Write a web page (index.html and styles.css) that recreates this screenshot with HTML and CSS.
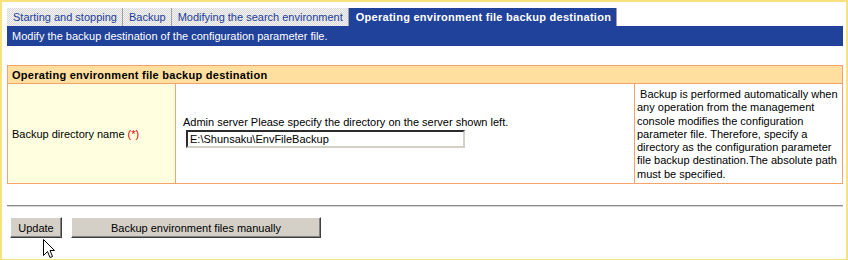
FILE: index.html
```html
<!DOCTYPE html>
<html lang="en">
  <head>
    <meta charset="UTF-8" />
    <title>Operating environment file backup destination</title>
    <link rel="stylesheet" href="styles.css">
  </head>
  <body>
    <div class="frame">
      <ul class="tabs">
        <li><a href="#">Starting and stopping</a></li>
        <li><a href="#">Backup</a></li>
        <li><a href="#">Modifying the search environment</a></li>
        <li class="active"><a href="#">Operating environment file backup destination</a></li>
      </ul>
      <div class="tab-desc">Modify the backup destination of the configuration parameter file.</div>

      <table class="section">
        <tr>
          <th colspan="3">Operating environment file backup destination</th>
        </tr>
        <tr>
          <td class="label">Backup directory name <span class="req">(*)</span></td>
          <td class="field">
            <div class="hint">Admin server Please specify the directory on the server shown left.</div>
            <input type="text" class="text-input" value="E:\Shunsaku\EnvFileBackup">
          </td>
          <td class="note">&nbsp;Backup is performed automatically when any operation from the management console modifies the configuration parameter file. Therefore, specify a directory as the configuration parameter file backup destination.The absolute path must be specified.</td>
        </tr>
      </table>

      <hr class="divider">

      <div class="actions">
        <button class="btn btn-update">Update</button>
        <button class="btn btn-wide">Backup environment files manually</button>
        <!-- mouse pointer sitting over the Update button -->
        <svg class="cursor" width="12" height="20" viewBox="0 0 12 20">
          <path d="M0.5 0.5 L0.5 16.5 L4.5 12.5 L7 18.5 L9.5 17.5 L7 11.5 L11.5 11.5 Z" fill="#fff" stroke="#000" stroke-width="1" />
        </svg>
      </div>
    </div>
  </body>
</html>
```

FILE: styles.css
```css
/* --- Base --- */
* {
  box-sizing: border-box;
}
body {
  margin: 0;
  background: #fff;
  font-family: "Liberation Sans", Arial, sans-serif;
  font-size: 11px;
  color: #000;
}
.frame {
  width: 848px;
  height: 260px;
  border: 2px solid #f9e27b;
  border-bottom-width: 1px;
  padding: 6px 3px 0 5px;
  position: relative;
}

/* --- Tabs --- */
.tabs {
  list-style: none;
  margin: 0;
  padding: 0;
  display: flex;
  height: 18px;
}
.tabs li {
  background: repeating-conic-gradient(#d8d8d8 0 25%, #f4f4f4 0 50%) 0 0 / 2px 2px;
  border-right: 1px solid #a0a0a0;
  display: flex;
  align-items: center;
}
.tabs a {
  color: #223d9b;
  text-decoration: none;
  padding: 0 5px 0 6px;
  line-height: 18px;
}
.tabs li.active {
  background: #21429a;
}
.tabs li.active a {
  color: #fff;
  font-weight: bold;
  letter-spacing: 0.27px;
  padding: 0 5px 0 7px;
}
.tab-desc {
  background: #21429a;
  color: #fff;
  height: 20px;
  line-height: 20px;
  padding-left: 5px;
}

/* --- Settings section --- */
.section {
  width: 100%;
  margin-top: 19px;
  border-collapse: collapse;
  border: 1px solid #f5a36b;
}
.section th {
  background: #ffdf9f;
  text-align: left;
  height: 18px;
  padding: 0 4px;
  border: 1px solid #f5a36b;
  font-size: 11px;
  letter-spacing: 0.27px;
}
.section td {
  border: 1px solid #f5a36b;
  vertical-align: middle;
  height: 100px;
}
.section .label {
  width: 168px;
  background: #ffffe0;
  padding-left: 4px;
}
.req {
  color: #e00000;
}
.section .field {
  width: 459px;
  padding: 0 6px 4px 7px;
}
.hint {
  margin-bottom: 2px;
}
.text-input {
  width: 279px;
  height: 18px;
  margin-left: 3px;
  padding: 0 2px;
  font: 11px "Liberation Sans", Arial, sans-serif;
  border: 2px inset #d4d0c8;
  border-top-color: #808080;
  border-left-color: #808080;
  border-right-color: #d4d0c8;
  border-bottom-color: #d4d0c8;
}
.section .note {
  padding: 3px 3px 1px 2px;
  line-height: 13.3px;
}

/* --- Footer buttons --- */
.divider {
  margin: 21px 0 0;
  border: none;
  border-top: 1px solid #8a8a8a;
  border-bottom: 1px solid #d8d8d8;
}
.actions {
  display: flex;
  gap: 9px;
  margin-top: 10px;
  padding-left: 3px;
  position: relative;
}
.btn {
  height: 21px;
  background: #d4d0c8;
  font: 11px "Liberation Sans", Arial, sans-serif;
  color: #000;
  border: 1px solid;
  border-color: #fff #404040 #404040 #fff;
  box-shadow: inset -1px -1px 0 #808080;
  padding: 0 6px;
}
.btn-update {
  width: 52px;
}
.btn-wide {
  width: 250px;
}
.cursor {
  position: absolute;
  left: 36px;
  top: 22px;
}
```
